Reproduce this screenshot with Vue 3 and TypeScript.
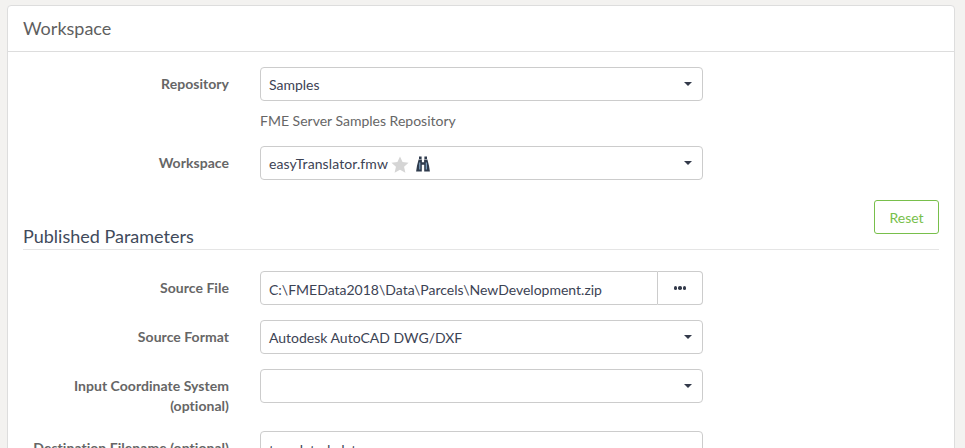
<script setup lang="ts">
const caret = true
</script>

<template>
  <div class="panel">
    <div class="head">Workspace</div>
    <div class="body">
      <div class="row">
        <label class="lbl">Repository</label>
        <div class="field select"><span>Samples</span><i v-if="caret" class="caret"></i></div>
      </div>
      <div class="help">FME Server Samples Repository</div>
      <div class="row">
        <label class="lbl">Workspace</label>
        <div class="field select">
          <span class="fname">easyTranslator.fmw</span>
          <svg class="star" width="18" height="17" viewBox="0 0 19 18"><path fill="#d5d5d5" d="M9.5 0.5l2.7 5.9 6.4.7-4.8 4.3 1.4 6.3-5.7-3.2-5.7 3.2 1.4-6.3L.4 7.1l6.4-.7z"/></svg>
          <svg class="bino" width="14" height="16" viewBox="0 0 14 16"><path fill="#2f3b4d" d="M3 .5h2.6v2.6H3zM8.4.5H11v2.6H8.4zM2.6 3.6h3.3v2.6h2.2V3.6h3.3l1.6 6.2.9 5.7H8.2V8.8H5.8v6.7H.1L1 9.8z"/><path fill="#8fb6d8" d="M3.3 6.5h1v7h-1zM9.8 6.5h1v7h-1z"/></svg>
          <i class="caret"></i>
        </div>
      </div>
      <div class="reset-line"><button class="reset">Reset</button></div>
      <h3 class="section">Published Parameters</h3>
      <div class="row">
        <label class="lbl">Source File</label>
        <div class="group">
          <div class="field input">C:\FMEData2018\Data\Parcels\NewDevelopment.zip</div>
          <div class="more"><i></i><i></i><i></i></div>
        </div>
      </div>
      <div class="row tight">
        <label class="lbl">Source Format</label>
        <div class="field select"><span>Autodesk AutoCAD DWG/DXF</span><i class="caret"></i></div>
      </div>
      <div class="row tight">
        <label class="lbl">Input Coordinate System<br />(optional)</label>
        <div class="field select"><i class="caret"></i></div>
      </div>
      <div class="row tight">
        <label class="lbl one-line">Destination Filename (optional)</label>
        <div class="field input">translated_data</div>
      </div>
    </div>
  </div>
</template>

<style scoped>
.panel {
  position: absolute;
  inset: 5px auto auto 7px;
  width: 948px;
  box-sizing: border-box;
  min-height: 460px;
  background: #fff;
  border: 1px solid #ddd;
  border-radius: 4px;
  font: 14px/20px Lato, sans-serif;
  color: #3b4252;
}
.head {
  height: 46px;
  padding: 0 15px;
  box-sizing: border-box;
  border-bottom: 1px solid #ddd;
  font-size: 18px;
  line-height: 45px;
  color: #5f5f5f;
}
.body {
  padding: 15px 15px 0;
}
.row {
  display: grid;
  grid-template-columns: 206px 443px;
  column-gap: 31px;
  align-items: start;
}
.lbl {
  font-weight: 700;
  text-align: right;
  color: #666;
  padding-top: 7px;
  letter-spacing: 0.04px;
}
.field {
  height: 34px;
  box-sizing: border-box;
  border: 1px solid #ccc;
  border-radius: 4px;
  background: #fff;
  padding: 8px 8px 6px;
  color: #3c4354;
}
.select {
  display: flex;
  align-items: center;
  position: relative;
}
.caret {
  position: absolute;
  right: 10px;
  top: 14px;
  width: 0;
  height: 0;
  border-left: 4px solid transparent;
  border-right: 4px solid transparent;
  border-top: 4px solid #333a4a;
}
.help {
  margin: 10px 0 15px 237px;
  color: #666;
}
.fname {
  letter-spacing: 0.1px;
}
.star {
  margin-left: 3px;
}
.bino {
  margin-left: 7px;
}
.reset-line {
  display: flex;
  justify-content: flex-end;
  margin-top: 20px;
  height: 34px;
}
.reset {
  width: 65px;
  height: 34px;
  background: #fff;
  border: 1px solid #78bf4b;
  border-radius: 3px;
  color: #78bf4b;
  font: 14px Lato, sans-serif;
  padding: 0;
}
.section {
  margin: -19px 0 21px;
  height: 35px;
  padding-top: 9px;
  box-sizing: border-box;
  width: 916px;
  border-bottom: 1px solid #e5e5e5;
  font-size: 18px;
  font-weight: 400;
  line-height: 24px;
  color: #414a5b;
}
.group {
  display: flex;
  height: 34px;
}
.group .input {
  flex: 1;
  border-radius: 4px 0 0 4px;
  white-space: nowrap;
}
.more {
  width: 45px;
  box-sizing: border-box;
  border: 1px solid #ccc;
  border-left: 0;
  border-radius: 0 4px 4px 0;
  display: flex;
  align-items: center;
  justify-content: center;
  gap: 1px;
}
.more i {
  width: 3.5px;
  height: 3.5px;
  background: #333a4a;
  border-radius: 50%;
}
.tight {
  margin-top: 15px;
}
.one-line {
  white-space: nowrap;
}
</style>

<style>
html, body {
  margin: 0;
  height: 448px;
  overflow: hidden;
  background: #f3f2f0;
}
</style>
